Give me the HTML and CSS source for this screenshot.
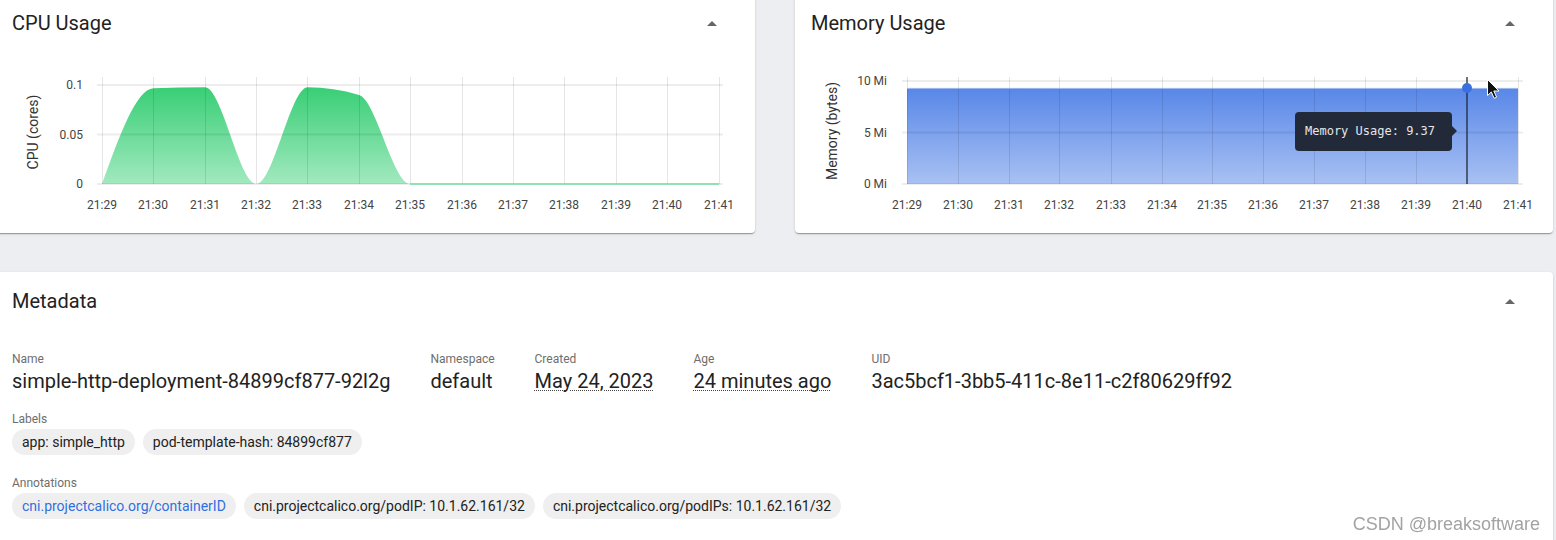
FILE: index.html
```html
<!DOCTYPE html>
<html lang="en">
<head>
<meta charset="utf-8">
<title>Pod details</title>
<link rel="stylesheet" href="styles.css">
</head>
<body>
<div class="page">
  <div class="chart-row">
    <section class="card chart-card">
      <div class="card-header">
        <h2 class="card-title">CPU Usage</h2>
        <span class="collapse-icon"><svg width="24" height="24" viewBox="0 0 24 24"><path d="M7 14l5-5 5 5z"/></svg></span>
      </div>
      <div class="chart">
        <svg class="chart-svg" width="759" height="190" viewBox="0 0 759 190">
          <defs>
            <linearGradient id="cpuFill" x1="0" y1="50" x2="0" y2="149" gradientUnits="userSpaceOnUse">
              <stop offset="0" stop-color="#36ce74"/>
              <stop offset="1" stop-color="#a2e9bf"/>
            </linearGradient>
          </defs>
          <path class="cpu-area" d="M106,149 C123.14,101.5 140.28,53.97 157.42,53.3 C174.56,52.63 191.7,52.3 208.84,52.3 C225.98,52.3 243.12,149 260.26,149 C277.4,149 294.54,52.3 311.68,52.3 C328.82,52.3 345.96,54.86 363.1,60 C380.24,65.14 397.38,149 414.52,149 L723,149 Z"/>
          <g class="grid-h">
            <line x1="101" y1="50" x2="727" y2="50"/>
            <line x1="101" y1="99.5" x2="727" y2="99.5"/>
            <line x1="101" y1="149" x2="727" y2="149"/>
          </g>
          <g class="grid-v">
            <line x1="106.5" y1="42" x2="106.5" y2="149"/>
            <line x1="157.5" y1="42" x2="157.5" y2="149"/>
            <line x1="209.5" y1="42" x2="209.5" y2="149"/>
            <line x1="260.5" y1="42" x2="260.5" y2="149"/>
            <line x1="311.5" y1="42" x2="311.5" y2="149"/>
            <line x1="363.5" y1="42" x2="363.5" y2="149"/>
            <line x1="414.5" y1="42" x2="414.5" y2="149"/>
            <line x1="466.5" y1="42" x2="466.5" y2="149"/>
            <line x1="517.5" y1="42" x2="517.5" y2="149"/>
            <line x1="568.5" y1="42" x2="568.5" y2="149"/>
            <line x1="620.5" y1="42" x2="620.5" y2="149"/>
            <line x1="671.5" y1="42" x2="671.5" y2="149"/>
            <line x1="723.5" y1="42" x2="723.5" y2="149"/>
          </g>
          <line class="cpu-zero" x1="414" y1="149" x2="723" y2="149"/>
          <g class="tick-y">
            <text x="87" y="54">0.1</text>
            <text x="87" y="103.5">0.05</text>
            <text x="87" y="153">0</text>
          </g>
          <g class="tick-x">
            <text x="106" y="174">21:29</text>
            <text x="157" y="174">21:30</text>
            <text x="209" y="174">21:31</text>
            <text x="260" y="174">21:32</text>
            <text x="311" y="174">21:33</text>
            <text x="363" y="174">21:34</text>
            <text x="414" y="174">21:35</text>
            <text x="466" y="174">21:36</text>
            <text x="517" y="174">21:37</text>
            <text x="568" y="174">21:38</text>
            <text x="620" y="174">21:39</text>
            <text x="671" y="174">21:40</text>
            <text x="723" y="174">21:41</text>
          </g>
          <text class="axis-title" transform="translate(42 97) rotate(-90)">CPU (cores)</text>
        </svg>
      </div>
    </section>

    <section class="card chart-card">
      <div class="card-header">
        <h2 class="card-title">Memory Usage</h2>
        <span class="collapse-icon"><svg width="24" height="24" viewBox="0 0 24 24"><path d="M7 14l5-5 5 5z"/></svg></span>
      </div>
      <div class="chart">
        <svg class="chart-svg" width="758" height="190" viewBox="0 0 758 190">
          <defs>
            <linearGradient id="memFill" x1="0" y1="53" x2="0" y2="149" gradientUnits="userSpaceOnUse">
              <stop offset="0" stop-color="#5887e8"/>
              <stop offset="1" stop-color="#a9c1f3"/>
            </linearGradient>
          </defs>
          <path class="mem-area" d="M112,149 L112,53.4 L214,53 L264,53.4 L723,53.4 L723,149 Z"/>
          <g class="grid-h">
            <line x1="107" y1="46" x2="728" y2="46"/>
            <line x1="107" y1="97.5" x2="728" y2="97.5"/>
            <line x1="107" y1="149" x2="728" y2="149"/>
          </g>
          <g class="grid-v">
            <line x1="112.5" y1="42" x2="112.5" y2="149"/>
            <line x1="163.5" y1="42" x2="163.5" y2="149"/>
            <line x1="214.5" y1="42" x2="214.5" y2="149"/>
            <line x1="264.5" y1="42" x2="264.5" y2="149"/>
            <line x1="316.5" y1="42" x2="316.5" y2="149"/>
            <line x1="367.5" y1="42" x2="367.5" y2="149"/>
            <line x1="417.5" y1="42" x2="417.5" y2="149"/>
            <line x1="468.5" y1="42" x2="468.5" y2="149"/>
            <line x1="519.5" y1="42" x2="519.5" y2="149"/>
            <line x1="570.5" y1="42" x2="570.5" y2="149"/>
            <line x1="621.5" y1="42" x2="621.5" y2="149"/>
            <line x1="723.5" y1="42" x2="723.5" y2="149"/>
          </g>
          <line class="mem-top" x1="112" y1="53.4" x2="723" y2="53.4"/>
          <g class="tick-y">
            <text x="92" y="50">10 Mi</text>
            <text x="92" y="101.5">5 Mi</text>
            <text x="92" y="153">0 Mi</text>
          </g>
          <g class="tick-x">
            <text x="112" y="174">21:29</text>
            <text x="163" y="174">21:30</text>
            <text x="214" y="174">21:31</text>
            <text x="264" y="174">21:32</text>
            <text x="316" y="174">21:33</text>
            <text x="367" y="174">21:34</text>
            <text x="417" y="174">21:35</text>
            <text x="468" y="174">21:36</text>
            <text x="519" y="174">21:37</text>
            <text x="570" y="174">21:38</text>
            <text x="621" y="174">21:39</text>
            <text x="672" y="174">21:40</text>
            <text x="723" y="174">21:41</text>
          </g>
          <text class="axis-title" transform="translate(42 96) rotate(-90)">Memory (bytes)</text>
          <line class="hover-line" x1="672" y1="42" x2="672" y2="149"/>
          <circle class="hover-dot" cx="672" cy="53" r="5"/>
          <path class="cursor" d="M692.5,44.5 L692.5,60.5 L696.3,57 L699.2,63.3 L701.6,62.2 L698.8,56 L704,56 Z"/>
        </svg>
        <div class="tooltip">Memory Usage: 9.37</div>
      </div>
    </section>
  </div>

  <section class="card metadata">
    <div class="card-header">
      <h2 class="card-title">Metadata</h2>
      <span class="collapse-icon"><svg width="24" height="24" viewBox="0 0 24 24"><path d="M7 14l5-5 5 5z"/></svg></span>
    </div>
    <div class="meta-body">
      <div class="field-row">
        <div class="field"><div class="field-label">Name</div><div class="field-value">simple-http-deployment-84899cf877-92l2g</div></div>
        <div class="field"><div class="field-label">Namespace</div><div class="field-value">default</div></div>
        <div class="field"><div class="field-label">Created</div><div class="field-value dotted">May 24, 2023</div></div>
        <div class="field"><div class="field-label">Age</div><div class="field-value dotted">24 minutes ago</div></div>
        <div class="field"><div class="field-label">UID</div><div class="field-value">3ac5bcf1-3bb5-411c-8e11-c2f80629ff92</div></div>
      </div>
      <div class="chip-group labels">
        <div class="field-label">Labels</div>
        <div class="chips">
          <span class="chip">app: simple_http</span>
          <span class="chip">pod-template-hash: 84899cf877</span>
        </div>
      </div>
      <div class="chip-group annotations">
        <div class="field-label">Annotations</div>
        <div class="chips">
          <span class="chip chip-link">cni.projectcalico.org/containerID</span>
          <span class="chip">cni.projectcalico.org/podIP: 10.1.62.161/32</span>
          <span class="chip">cni.projectcalico.org/podIPs: 10.1.62.161/32</span>
        </div>
      </div>
    </div>
  </section>
</div>
<div class="watermark">CSDN @breaksoftware</div>
</body>
</html>
```

FILE: styles.css
```css
html, body {
  margin: 0;
  padding: 0;
  height: 540px;
  overflow: hidden;
  background: #eceef1;
}

body {
  font-family: Roboto, "Noto Sans", "Liberation Sans", sans-serif;
  color: #222;
}

.page {
  margin: -6px 3px 0 -4px;
  display: flex;
  flex-direction: column;
  gap: 39px;
}

.chart-row {
  display: grid;
  grid-template-columns: 759px 758px;
  gap: 40px;
}

.card {
  background: #fff;
  border-radius: 4px;
  box-shadow: 0 2px 1px -1px rgba(0,0,0,0.2), 0 1px 1px 0 rgba(0,0,0,0.14), 0 1px 3px 0 rgba(0,0,0,0.12);
}

.chart-card {
  height: 239px;
  box-sizing: border-box;
  padding-bottom: 8px;
}

.card-header {
  display: flex;
  align-items: center;
  justify-content: space-between;
  padding: 17px 31px 0 16px;
  height: 24px;
}

.card-title {
  margin: 0;
  font-size: 20px;
  font-weight: 400;
  line-height: 24px;
  color: #222;
}

.collapse-icon {
  display: flex;
  width: 24px;
  height: 24px;
  margin-top: 2px;
}

.collapse-icon svg {
  fill: #666;
}

.chart {
  position: relative;
  height: 190px;
}

.chart-svg {
  display: block;
  overflow: visible;
}

.cpu-area {
  fill: url(#cpuFill);
}

.mem-area {
  fill: url(#memFill);
}

.grid-h line {
  stroke: rgba(0,0,0,0.07);
  stroke-width: 2;
}

.grid-v line {
  stroke: rgba(0,0,0,0.1);
  stroke-width: 1;
}

.cpu-zero {
  stroke: #74daa3;
  stroke-width: 1.5;
}

.mem-top {
  stroke: #9db6ee;
  stroke-width: 1;
}

.tick-y text {
  font-family: Roboto, sans-serif;
  font-size: 12px;
  fill: #444;
  text-anchor: end;
}

.tick-x text {
  font-family: Roboto, sans-serif;
  font-size: 12px;
  fill: #444;
  text-anchor: middle;
}

.axis-title {
  font-family: Roboto, sans-serif;
  font-size: 14px;
  fill: #333;
  text-anchor: middle;
}

.hover-line {
  stroke: #1f2838;
  stroke-width: 1.3;
}

.hover-dot {
  fill: #3a6fe0;
}

.cursor {
  fill: #111;
  stroke: #fff;
  stroke-width: 1;
  stroke-linejoin: round;
}

.tooltip {
  position: absolute;
  left: 500px;
  top: 77px;
  width: 147px;
  height: 39px;
  padding-left: 10px;
  line-height: 39px;
  background: #222a3a;
  border-radius: 4px;
  color: #e6e6e6;
  font-family: "DejaVu Sans Mono", "Liberation Mono", monospace;
  font-size: 12px;
  white-space: nowrap;
}

.tooltip::after {
  content: "";
  position: absolute;
  right: -5px;
  top: 14px;
  border-left: 5px solid #222a3a;
  border-top: 5px solid transparent;
  border-bottom: 5px solid transparent;
}

.metadata {
  padding-bottom: 40px;
}

.meta-body {
  padding: 38px 16px 0 16px;
}

.field-row {
  display: flex;
  gap: 40px;
}

.field-label {
  font-size: 12px;
  line-height: 16px;
  color: #6e6e6e;
}

.field-value {
  font-size: 20px;
  line-height: 28px;
  color: #222;
}

.dotted {
  text-decoration: underline dotted #444;
  text-decoration-thickness: 1px;
  text-underline-offset: 2px;
}

.chip-group.labels {
  margin-top: 16px;
}

.chip-group.annotations {
  margin-top: 20px;
}

.chips {
  display: flex;
  gap: 8px;
  margin-top: 2px;
}

.chip {
  display: inline-flex;
  align-items: center;
  height: 26px;
  padding: 0 10px;
  border-radius: 13px;
  background: #efefef;
  font-size: 14px;
  color: #222;
  white-space: nowrap;
}

.chip-link {
  color: #2f6fe0;
}

.watermark {
  position: fixed;
  right: 16px;
  bottom: 6px;
  font-family: "Liberation Sans", Arial, sans-serif;
  font-size: 18px;
  line-height: 20px;
  color: #a3a3a3;
}
```
